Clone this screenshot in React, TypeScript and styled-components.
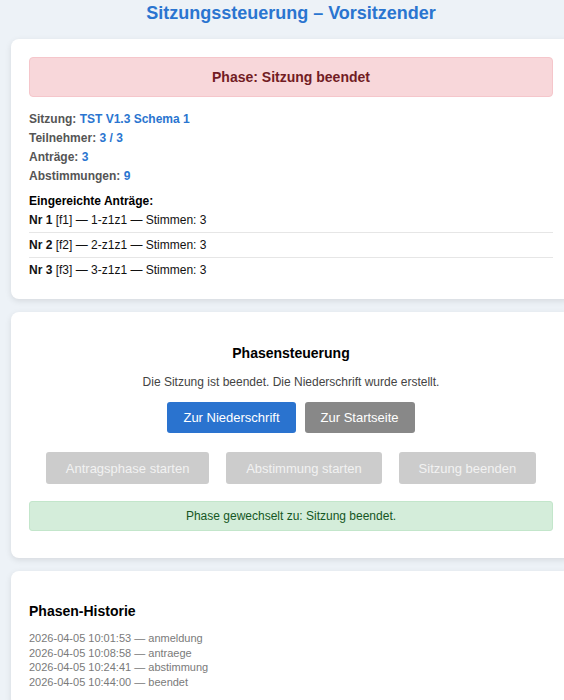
import styled, { createGlobalStyle } from "styled-components";

const GlobalStyle = createGlobalStyle`
    html, body {
        margin: 0;
        padding: 0;
        background: #edf2f7;
        overflow-x: hidden;
        font-family: "Liberation Sans", Arial, sans-serif;
    }
`;

const Page = styled.div`
    width: 582px;
    padding: 0 11px 20px;
    box-sizing: border-box;
`;

const Title = styled.h1`
    margin: 0;
    padding: 3px 0 15px;
    text-align: center;
    font-size: 18px;
    font-weight: bold;
    color: #2a75d0;
`;

const Card = styled.section`
    background: #fff;
    border-radius: 8px;
    box-shadow: 0 2px 6px rgba(0, 0, 0, 0.1);
    padding: 18px 18px 17px;
    margin-bottom: 13px;
`;

const PhaseBox = styled.div`
    background: #f8d7da;
    border: 1px solid #f5c6cb;
    border-radius: 4px;
    color: #721c24;
    font-weight: bold;
    font-size: 14px;
    line-height: 16px;
    text-align: center;
    padding: 11px;
    margin-bottom: 13px;
`;

const InfoLine = styled.div`
    font-size: 12px;
    font-weight: bold;
    color: #555;
    line-height: 19px;
`;

const Value = styled.span`
    color: #2a75d0;
`;

const SubTitle = styled.div`
    margin-top: 8px;
    font-size: 12px;
    font-weight: bold;
    color: #000;
    line-height: 14px;
`;

const Row = styled.div`
    font-size: 12px;
    color: #111;
    padding: 5px 0;
    line-height: 14px;
    border-bottom: 1px solid #e6e6e6;
    &:last-child {
        border-bottom: none;
    }
`;

const Center = styled.div`
    text-align: center;
    padding-top: 15px;
`;

const SectionHead = styled.h3`
    margin: 0 0 14px;
    font-size: 14px;
    font-weight: bold;
    color: #000;
`;

const Note = styled.p`
    margin: 0 0 13px;
    font-size: 12px;
    color: #444;
`;

const ButtonRow = styled.div<{ $spread?: boolean }>`
    display: flex;
    justify-content: ${(p) => (p.$spread ? "space-evenly" : "center")};
    gap: ${(p) => (p.$spread ? "0" : "9px")};
    margin-bottom: ${(p) => (p.$spread ? "17px" : "19px")};
`;

const Button = styled.button<{ $tone: "blue" | "gray" | "off" }>`
    border: none;
    border-radius: 3px;
    font-family: "Liberation Sans", Arial, sans-serif;
    font-size: 13px;
    height: ${(p) => (p.$tone === "off" ? "32px" : "31px")};
    color: ${(p) => (p.$tone === "off" ? "#f2f2f2" : "#fff")};
    background: ${(p) =>
        p.$tone === "blue" ? "#2a73cf" : p.$tone === "gray" ? "#888" : "#ccc"};
    padding: ${(p) => (p.$tone === "off" ? "0 20px" : "0 16px")};
`;

const Success = styled.div`
    background: #d4edda;
    border: 1px solid #c3e6cb;
    border-radius: 3px;
    color: #155724;
    font-size: 12px;
    line-height: 14px;
    padding: 7px;
    text-align: center;
    margin-bottom: 10px;
`;

const HistoryHead = styled.h3`
    margin: 14px 0 12px;
    font-size: 14px;
    font-weight: bold;
    color: #000;
`;

const HistoryLine = styled.div`
    font-size: 11px;
    color: #7a7a7a;
    line-height: 14.7px;
`;

const antraege = [
    { nr: 1, code: "f1", name: "1-z1z1", stimmen: 3 },
    { nr: 2, code: "f2", name: "2-z1z1", stimmen: 3 },
    { nr: 3, code: "f3", name: "3-z1z1", stimmen: 3 },
];

const history = [
    ["2026-04-05 10:01:53", "anmeldung"],
    ["2026-04-05 10:08:58", "antraege"],
    ["2026-04-05 10:24:41", "abstimmung"],
    ["2026-04-05 10:44:00", "beendet"],
];

export default function App() {
    return (
        <>
            <GlobalStyle />
            <Page>
                <Title>Sitzungssteuerung – Vorsitzender</Title>
                <Card>
                    <PhaseBox>Phase: Sitzung beendet</PhaseBox>
                    <InfoLine>Sitzung: <Value>TST V1.3 Schema 1</Value></InfoLine>
                    <InfoLine>Teilnehmer: <Value>3 / 3</Value></InfoLine>
                    <InfoLine>Anträge: <Value>3</Value></InfoLine>
                    <InfoLine>Abstimmungen: <Value>9</Value></InfoLine>
                    <SubTitle>Eingereichte Anträge:</SubTitle>
                    <div>
                        {antraege.map((a) => (
                            <Row key={a.nr}>
                                <b>Nr {a.nr}</b> [{a.code}] — {a.name} — Stimmen: {a.stimmen}
                            </Row>
                        ))}
                    </div>
                </Card>
                <Card>
                    <Center>
                        <SectionHead>Phasensteuerung</SectionHead>
                        <Note>Die Sitzung ist beendet. Die Niederschrift wurde erstellt.</Note>
                        <ButtonRow>
                            <Button $tone="blue">Zur Niederschrift</Button>
                            <Button $tone="gray">Zur Startseite</Button>
                        </ButtonRow>
                        <ButtonRow $spread>
                            <Button $tone="off" disabled>Antragsphase starten</Button>
                            <Button $tone="off" disabled>Abstimmung starten</Button>
                            <Button $tone="off" disabled>Sitzung beenden</Button>
                        </ButtonRow>
                    </Center>
                    <Success>Phase gewechselt zu: Sitzung beendet.</Success>
                </Card>
                <Card>
                    <HistoryHead>Phasen-Historie</HistoryHead>
                    {history.map(([t, p]) => (
                        <HistoryLine key={t}>{t} — {p}</HistoryLine>
                    ))}
                </Card>
            </Page>
        </>
    );
}
